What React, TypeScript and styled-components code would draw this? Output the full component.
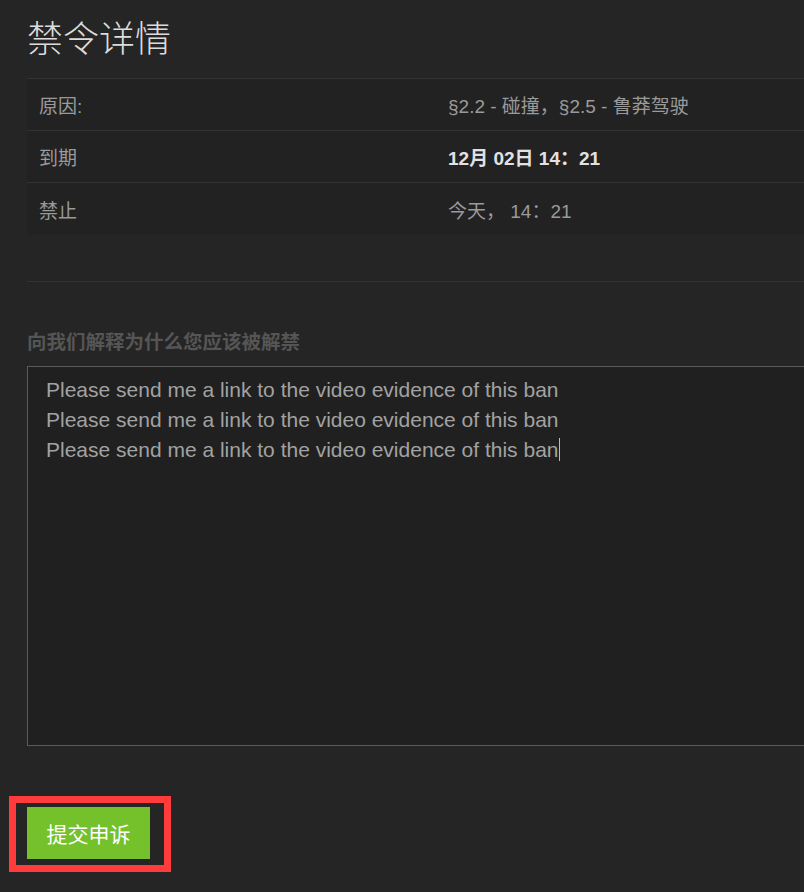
import styled, { createGlobalStyle } from 'styled-components';

const GlobalStyle = createGlobalStyle`
	html, body {
		margin: 0;
		padding: 0;
		background: #252525;
		overflow: hidden;
	}
`;

const Page = styled.div`
	width: 804px;
	height: 892px;
	padding-left: 27px;
	box-sizing: border-box;
	font-family: 'Liberation Sans', 'Noto Sans CJK SC', sans-serif;
	background: #252525;
	overflow: hidden;
`;

const Content = styled.div`
	width: 820px;
`;

const Title = styled.h1`
	margin: 0;
	padding-top: 13px;
	height: 78px;
	box-sizing: border-box;
	font-family: 'Noto Sans CJK SC', sans-serif;
	font-weight: 300;
	font-size: 36px;
	line-height: 46px;
	color: #dcdcdc;
`;

const Table = styled.div`
	background: #222222;
	border-top: 1px solid #333333;
`;

const Row = styled.div`
	display: grid;
	grid-template-columns: 409px 1fr;
	height: 52px;
	align-items: center;
	border-bottom: 1px solid #333333;
	box-sizing: border-box;
	&:last-child {
		border-bottom: none;
	}
`;

const Cell = styled.div<{ $strong?: boolean }>`
	padding-left: 12px;
	font-size: 19px;
	color: ${(p) => (p.$strong ? '#e2e2e2' : '#9a9a9a')};
	font-weight: ${(p) => (p.$strong ? 'bold' : 'normal')};
`;

const Divider = styled.div`
	height: 1px;
	background: #323232;
	margin-top: 46px;
`;

const FieldLabel = styled.div`
	margin-top: 48px;
	font-size: 19.5px;
	font-weight: bold;
	color: #555555;
	line-height: 24px;
`;

const TextBox = styled.div`
	margin-top: 12px;
	height: 380px;
	box-sizing: border-box;
	border: 1px solid #5a5a5a;
	background: #202020;
	padding: 8px 18px;
	font-size: 21px;
	line-height: 30px;
	color: #a2a2a2;
`;

const Caret = styled.span`
	display: inline-block;
	width: 1px;
	height: 23px;
	background: #bbbbbb;
	vertical-align: -4px;
`;

const Footer = styled.div`
	margin-top: 61px;
	position: relative;
	width: 123px;
`;

const SubmitButton = styled.button`
	width: 123px;
	height: 52px;
	border: none;
	background: #75c12b;
	color: #ffffff;
	font-family: 'Noto Sans CJK SC', sans-serif;
	font-size: 21px;
	padding: 0;
	cursor: pointer;
`;

const Highlight = styled.div`
	position: absolute;
	left: -18px;
	top: -11px;
	width: 162px;
	height: 76px;
	box-sizing: border-box;
	border: 7px solid #ff3b3b;
	pointer-events: none;
`;

const rows = [
	{ label: '原因:', value: '§2.2 - 碰撞，§2.5 - 鲁莽驾驶', strong: false },
	{ label: '到期', value: '12月 02日 14：21', strong: true },
	{ label: '禁止', value: '今天， 14：21', strong: false },
];

const line = 'Please send me a link to the video evidence of this ban';

const App = () => {
	return (
		<Page>
			<GlobalStyle />
			<Content>
				<Title>禁令详情</Title>
				<Table>
					{rows.map((r) => (
						<Row key={r.label}>
							<Cell>{r.label}</Cell>
							<Cell $strong={r.strong}>{r.value}</Cell>
						</Row>
					))}
				</Table>
				<Divider />
				<FieldLabel>向我们解释为什么您应该被解禁</FieldLabel>
				<TextBox>
					<div>{line}</div>
					<div>{line}</div>
					<div>
						{line}
						<Caret />
					</div>
				</TextBox>
			</Content>
			<Footer>
				<SubmitButton>提交申诉</SubmitButton>
				<Highlight />
			</Footer>
		</Page>
	);
};

export default App;
